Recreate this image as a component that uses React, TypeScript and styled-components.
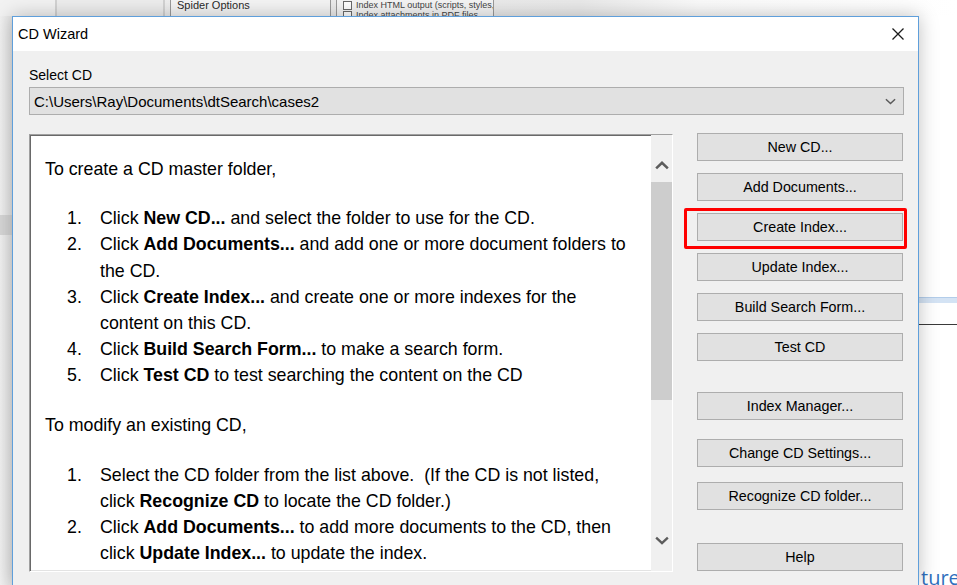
import React from 'react';
import styled, { createGlobalStyle } from 'styled-components';

const GlobalStyle = createGlobalStyle`
	html, body {
		margin: 0;
		padding: 0;
		background: #fff;
	}
	body {
		font-family: 'Liberation Sans', Arial, sans-serif;
		color: #000;
	}
`;

const Page = styled.div`
	width: 957px;
	height: 585px;
	overflow: hidden;
	background: #fff;
	display: flex;
	flex-direction: column;
`;

/* window lying behind the wizard */
const BackStrip = styled.div`
	height: 16px;
	display: flex;
	flex-shrink: 0;
	background: linear-gradient(to right, #efefef 0, #e9e9e9 580px, #fafafa 700px, #fff 100%);
	overflow: hidden;
`;

const StripPane = styled.div<{ $width: number; $tone: string }>`
	width: ${({ $width }) => $width}px;
	flex-shrink: 0;
	background: ${({ $tone }) => $tone};
	border-right: 2px solid #d2d2d2;
`;

const OptionsBox = styled.div<{ $width: number }>`
	width: ${({ $width }) => $width}px;
	flex-shrink: 0;
	box-sizing: border-box;
	border-left: 1px solid #9a9a9a;
	border-right: 1px solid #9a9a9a;
	background: #f4f4f4;
	overflow: hidden;
	font-size: 11px;
	color: #2a2a2a;
	padding-left: 6px;
	line-height: 12px;
	white-space: nowrap;
`;

const StripGap = styled.div`
	width: 5px;
	flex-shrink: 0;
`;

const CheckRow = styled.div`
	display: flex;
	align-items: center;
	gap: 4px;
	height: 10px;
	font-size: 9px;
	color: #444;
	white-space: nowrap;
`;

const TinyCheck = styled.span`
	width: 7px;
	height: 7px;
	border: 1px solid #6a6a6a;
	background: #fff;
	flex-shrink: 0;
`;

const Desk = styled.div`
	flex: 1;
	display: flex;
	min-height: 0;
`;

const LeftGutter = styled.div`
	width: 12px;
	flex-shrink: 0;
	background: linear-gradient(to right, #f1f1f1, #e4e4e4);
	display: flex;
	flex-direction: column;
`;

const GutterBand = styled.div`
	margin-top: 199px;
	height: 20px;
	background: #d6d6d6;
`;

const RightGutter = styled.div`
	flex: 1;
	display: flex;
	flex-direction: column;
	background: #fff;
	overflow: hidden;
`;

const SelectionBand = styled.div`
	margin-top: 281px;
	height: 5px;
	background: #d4e3f4;
	border-top: 1px solid #b3cdea;
`;

const RuleLine = styled.div`
	margin-top: 21px;
	height: 1px;
	background: #3a3a3a;
`;

const LinkTail = styled.div`
	margin-top: auto;
	padding-left: 2px;
	font-family: 'Open Sans', 'Noto Sans', sans-serif;
	font-size: 20px;
	line-height: 22px;
	color: #2f6fbd;
	white-space: nowrap;
	transform: translateY(4px);
`;

/* the wizard dialog */
const Dialog = styled.div`
	width: 907px;
	flex-shrink: 0;
	box-sizing: border-box;
	border: 1px solid #5f9fdb;
	border-bottom: none;
	background: #f0f0f0;
	box-shadow: 0 0 18px rgba(0, 0, 0, 0.25);
	position: relative;
	z-index: 1;
	display: flex;
	flex-direction: column;
`;

const TitleBar = styled.div`
	height: 34px;
	background: #fff;
	display: flex;
	align-items: center;
	justify-content: space-between;
	padding: 0 13px 0 5px;
	font-size: 14.5px;
`;

const CloseGlyph = styled.svg`
	width: 14px;
	height: 14px;
`;

const Body = styled.div`
	padding: 16px 14px 0 16px;
	display: flex;
	flex-direction: column;
`;

const FieldLabel = styled.div`
	font-size: 14px;
	line-height: 17px;
	margin-bottom: 3px;
`;

const Combo = styled.div`
	height: 28px;
	box-sizing: border-box;
	border: 1px solid #adadad;
	background: #e1e1e1;
	display: flex;
	align-items: center;
	justify-content: space-between;
	padding: 0 7px 0 4px;
	font-size: 15px;
`;

const ContentRow = styled.div`
	margin-top: 19px;
	display: flex;
	align-items: flex-start;
	gap: 24px;
`;

const HelpPanel = styled.div`
	width: 644px;
	height: 438px;
	box-sizing: border-box;
	border-top: 1px solid #a0a0a0;
	border-left: 1px solid #a0a0a0;
	border-right: 1px solid #fff;
	border-bottom: 1px solid #fff;
	box-shadow: inset 1px 1px 0 #696969, inset -1px -1px 0 #e3e3e3;
	background: #fff;
	display: flex;
	overflow: hidden;
`;

const HelpText = styled.div`
	flex: 1;
	padding: 21px 0 0 15px;
	font-size: 17.8px;
	line-height: 26.2px;
	overflow: hidden;
	white-space: nowrap;
`;

const Lead = styled.p`
	margin: 0;
`;

const Steps = styled.ol<{ $top: number }>`
	list-style: none;
	margin: ${({ $top }) => $top}px 0 23px;
	padding: 0 0 0 22px;
`;

const Step = styled.li`
	display: flex;
`;

const StepNum = styled.span`
	width: 33px;
	flex-shrink: 0;
`;

const Scrollbar = styled.div`
	width: 21px;
	flex-shrink: 0;
	background: #f0f0f0;
	display: flex;
	flex-direction: column;
	padding: 20px 0;
	box-sizing: border-box;
`;

const ArrowCell = styled.div`
	height: 21px;
	display: flex;
	align-items: center;
	justify-content: center;
`;

const Thumb = styled.div`
	margin-top: 6px;
	height: 218px;
	background: #cdcdcd;
`;

const TrackFill = styled.div`
	flex: 1;
`;

const ButtonColumn = styled.div`
	width: 206px;
	margin-top: -1px;
	display: flex;
	flex-direction: column;
`;

const Slot = styled.div<{ $gap: number }>`
	margin-top: ${({ $gap }) => $gap}px;
	position: relative;
`;

const WizardButton = styled.button`
	width: 100%;
	height: 28px;
	box-sizing: border-box;
	border: 1px solid #adadad;
	background: #e1e1e1;
	font-family: 'Liberation Sans', Arial, sans-serif;
	font-size: 14.3px;
	color: #000;
	padding: 0;
	display: block;
`;

const Callout = styled.span`
	position: absolute;
	top: -5px;
	left: -13px;
	right: -4px;
	bottom: -8px;
	border: 3px solid #ff0000;
	border-radius: 2px;
	pointer-events: none;
`;

const Chevron = ({ up, color, w, h, weight }: { up?: boolean; color: string; w: number; h: number; weight: number }) => (
	<svg width={w} height={h} viewBox="0 0 12 7">
		<polyline
			points={up ? '1,6 6,1.2 11,6' : '1,1 6,5.8 11,1'}
			fill="none"
			stroke={color}
			strokeWidth={weight}
		/>
	</svg>
);

interface StepData {
	lines: React.ReactNode[];
}

const createSteps: StepData[] = [
	{ lines: [<>Click <b>New CD...</b> and select the folder to use for the CD.</>] },
	{
		lines: [
			<>Click <b>Add Documents...</b> and add one or more document folders to</>,
			<>the CD.</>,
		],
	},
	{
		lines: [
			<>Click <b>Create Index...</b> and create one or more indexes for the</>,
			<>content on this CD.</>,
		],
	},
	{ lines: [<>Click <b>Build Search Form...</b> to make a search form.</>] },
	{ lines: [<>Click <b>Test CD</b> to test searching the content on the CD</>] },
];

const modifySteps: StepData[] = [
	{
		lines: [
			<>Select the CD folder from the list above.&nbsp; (If the CD is not listed,</>,
			<>click <b>Recognize CD</b> to locate the CD folder.)</>,
		],
	},
	{
		lines: [
			<>Click <b>Add Documents...</b> to add more documents to the CD, then</>,
			<>click <b>Update Index...</b> to update the index.</>,
		],
	},
	{ lines: [<>Click <b>Test CD</b> to test searching the updated CD.</>] },
];

const buttons = [
	{ label: 'New CD...', gap: 0 },
	{ label: 'Add Documents...', gap: 12 },
	{ label: 'Create Index...', gap: 12, marked: true },
	{ label: 'Update Index...', gap: 12 },
	{ label: 'Build Search Form...', gap: 12 },
	{ label: 'Test CD', gap: 12 },
	{ label: 'Index Manager...', gap: 31 },
	{ label: 'Change CD Settings...', gap: 19 },
	{ label: 'Recognize CD folder...', gap: 15 },
	{ label: 'Help', gap: 33 },
];

const StepList = ({ steps, top }: { steps: StepData[]; top: number }) => (
	<Steps $top={top}>
		{steps.map((step, i) => (
			<Step key={i}>
				<StepNum>{i + 1}.</StepNum>
				<span>
					{step.lines.map((line, j) => (
						<React.Fragment key={j}>
							{j > 0 && <br />}
							{line}
						</React.Fragment>
					))}
				</span>
			</Step>
		))}
	</Steps>
);

const App = () => {
	return (
		<Page>
			<GlobalStyle />
			<BackStrip>
				<StripPane $width={55} $tone="#f2f2f2" />
				<StripPane $width={106} $tone="#ededed" />
				<StripGap />
				<OptionsBox $width={161}>
					<div style={{ marginTop: -1 }}>Spider Options</div>
				</OptionsBox>
				<StripGap />
				<OptionsBox $width={158}>
					<CheckRow>
						<TinyCheck />
						Index HTML output (scripts, styles, links, and
					</CheckRow>
					<CheckRow>
						<TinyCheck />
						Index attachments in PDF files
					</CheckRow>
				</OptionsBox>
			</BackStrip>

			<Desk>
				<LeftGutter>
					<GutterBand />
				</LeftGutter>

				<Dialog>
					<TitleBar>
						<span>CD Wizard</span>
						<CloseGlyph viewBox="0 0 14 14">
							<path d="M1.5 1.5 L12.5 12.5 M12.5 1.5 L1.5 12.5" stroke="#1b1b1b" strokeWidth="1.3" />
						</CloseGlyph>
					</TitleBar>

					<Body>
						<FieldLabel>Select CD</FieldLabel>
						<Combo>
							<span>C:\Users\Ray\Documents\dtSearch\cases2</span>
							<Chevron color="#5a5a5a" w={11} h={7} weight={1.6} />
						</Combo>

						<ContentRow>
							<HelpPanel>
								<HelpText>
									<Lead>To create a CD master folder,</Lead>
									<StepList steps={createSteps} top={23} />
									<Lead>To modify an existing CD,</Lead>
									<StepList steps={modifySteps} top={24} />
								</HelpText>
								<Scrollbar>
									<ArrowCell>
										<Chevron up color="#5c5c5c" w={14} h={9} weight={2.2} />
									</ArrowCell>
									<Thumb />
									<TrackFill />
									<ArrowCell>
										<Chevron color="#5c5c5c" w={14} h={9} weight={2} />
									</ArrowCell>
								</Scrollbar>
							</HelpPanel>

							<ButtonColumn>
								{buttons.map((btn) => (
									<Slot key={btn.label} $gap={btn.gap}>
										<WizardButton>{btn.label}</WizardButton>
										{btn.marked && <Callout />}
									</Slot>
								))}
							</ButtonColumn>
						</ContentRow>
					</Body>
				</Dialog>

				<RightGutter>
					<SelectionBand />
					<RuleLine />
					<LinkTail>ture</LinkTail>
				</RightGutter>
			</Desk>
		</Page>
	);
};

export default App;
